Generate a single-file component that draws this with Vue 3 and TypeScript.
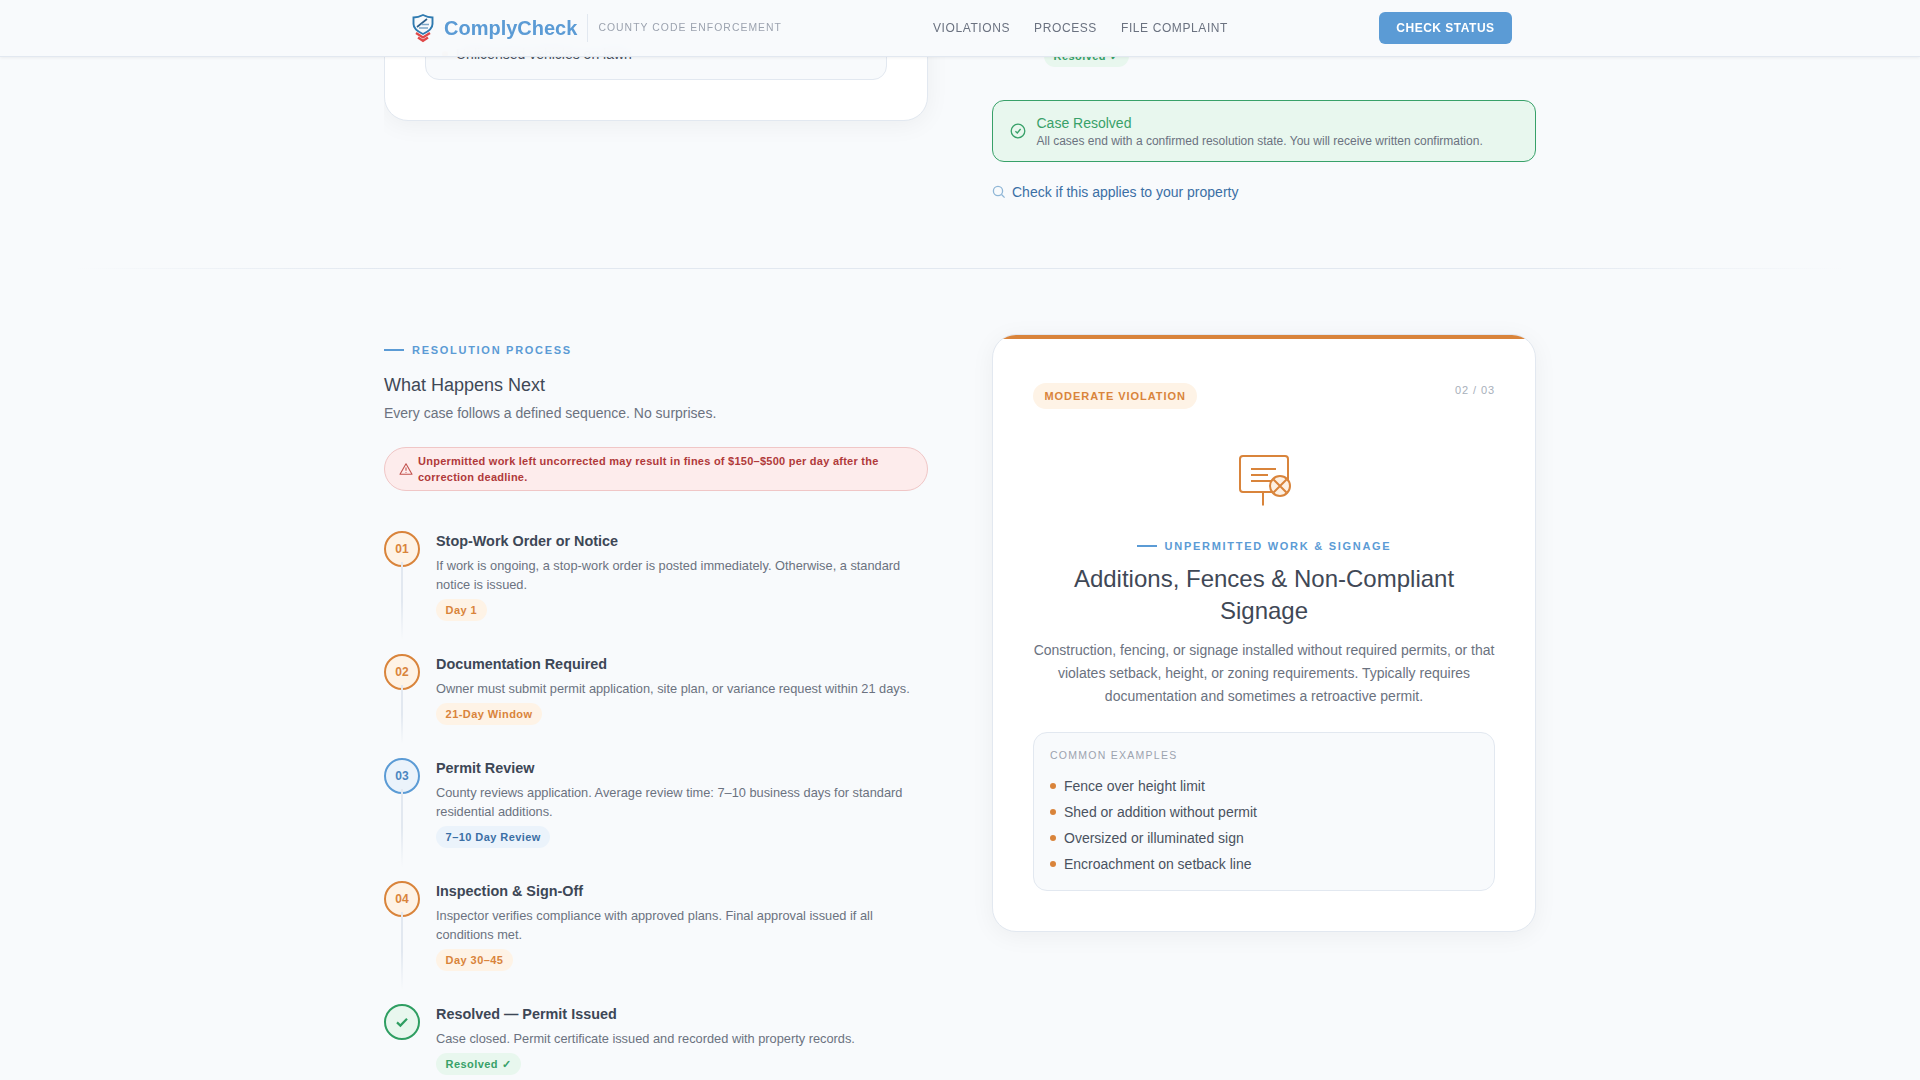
<script setup lang="ts">
interface Step {
    label: string,
    title: string,
    text: string,
    tag: string,
    tone: 'orange' | 'blue' | 'green',
    done?: boolean,
}

const navItems: Array<string> = ['VIOLATIONS', 'PROCESS', 'FILE COMPLAINT'];

const steps: Array<Step> = [
    {
        label: '01',
        title: 'Stop-Work Order or Notice',
        text: 'If work is ongoing, a stop-work order is posted immediately. Otherwise, a standard notice is issued.',
        tag: 'Day 1',
        tone: 'orange',
    },
    {
        label: '02',
        title: 'Documentation Required',
        text: 'Owner must submit permit application, site plan, or variance request within 21 days.',
        tag: '21-Day Window',
        tone: 'orange',
    },
    {
        label: '03',
        title: 'Permit Review',
        text: 'County reviews application. Average review time: 7–10 business days for standard residential additions.',
        tag: '7–10 Day Review',
        tone: 'blue',
    },
    {
        label: '04',
        title: 'Inspection & Sign-Off',
        text: 'Inspector verifies compliance with approved plans. Final approval issued if all conditions met.',
        tag: 'Day 30–45',
        tone: 'orange',
    },
    {
        label: '',
        title: 'Resolved — Permit Issued',
        text: 'Case closed. Permit certificate issued and recorded with property records.',
        tag: 'Resolved ✓',
        tone: 'green',
        done: true,
    },
];

const examples: Array<string> = [
    'Fence over height limit',
    'Shed or addition without permit',
    'Oversized or illuminated sign',
    'Encroachment on setback line',
];

const priorExamples: Array<string> = ['Unlicensed vehicles on lawn'];
</script>

<template>
    <header class="site-header">
        <div class="header-inner">
            <div class="brand">
                <svg class="brand-icon" viewBox="0 0 28 32" fill="none">
                    <path d="M15 3C11.5 4.8 8.5 5.5 5.5 5.5V12C5.5 16.5 9.5 19.5 15 22C20.5 19.5 24.5 16.5 24.5 12V5.5C21.5 5.5 18.5 4.8 15 3Z" stroke="#2f7ab0" stroke-width="1.9" />
                    <path d="M9 15L19 7" stroke="#2c5f8a" stroke-width="1.7" />
                    <path d="M13.5 12.5H21M11 16H20" stroke="#7da6c8" stroke-width="1.5" />
                    <path d="M8 21L15 25.5L22 21" stroke="#e04848" stroke-width="2.3" />
                    <path d="M10 25.5L15 28.8L20 25.5" stroke="#e04848" stroke-width="2.3" />
                </svg>
                <span class="brand-name">ComplyCheck</span>
                <span class="brand-sub">COUNTY CODE ENFORCEMENT</span>
            </div>
            <nav class="nav">
                <span v-for="item in navItems" :key="item">{{ item }}</span>
            </nav>
            <button class="status-btn" type="button">CHECK STATUS</button>
        </div>
    </header>

    <main class="page">
        <section class="grid top-section">
            <div class="top-left">
                <div class="card-tail">
                    <div class="examples examples-tail">
                        <ul>
                            <li v-for="item in priorExamples" :key="item">{{ item }}</li>
                        </ul>
                    </div>
                </div>
            </div>
            <div class="top-right">
                <div class="prior-step">
                    <span class="tag tag-green">Resolved ✓</span>
                </div>
                <div class="resolved-box">
                    <svg class="resolved-icon" viewBox="0 0 16 16" fill="none">
                        <circle cx="8" cy="8" r="6.8" stroke="#38a169" stroke-width="1.3" />
                        <path d="M5.4 8.2L7.3 10L10.6 6" stroke="#38a169" stroke-width="1.3" />
                    </svg>
                    <div class="resolved-copy">
                        <div class="resolved-title">Case Resolved</div>
                        <div class="resolved-text">All cases end with a confirmed resolution state. You will receive written confirmation.</div>
                    </div>
                </div>
                <div class="check-link">
                    <svg class="check-icon" viewBox="0 0 14 14" fill="none">
                        <circle cx="6" cy="6" r="4.6" stroke="#8fb6d6" stroke-width="1.3" />
                        <path d="M9.5 9.5L12.6 12.6" stroke="#8fb6d6" stroke-width="1.3" />
                    </svg>
                    <span>Check if this applies to your property</span>
                </div>
            </div>
        </section>

        <div class="divider"></div>

        <section class="grid process-section">
            <div class="process-col">
                <div class="eyebrow"><i></i>RESOLUTION PROCESS</div>
                <h2 class="process-title">What Happens Next</h2>
                <p class="process-sub">Every case follows a defined sequence. No surprises.</p>
                <div class="alert">
                    <svg class="alert-icon" viewBox="0 0 14 14" fill="none">
                        <path d="M7 1.8L13 12.2H1L7 1.8Z" stroke="#c2524e" stroke-width="1.1" stroke-linejoin="round" />
                        <path d="M7 5.6V8.8M7 10V10.8" stroke="#c2524e" stroke-width="1.1" />
                    </svg>
                    <span>Unpermitted work left uncorrected may result in fines of $150–$500 per day after the correction deadline.</span>
                </div>
                <ol class="steps">
                    <li
                        v-for="(step, index) in steps"
                        :key="step.title"
                        class="step"
                    >
                        <div class="step-rail">
                            <div class="step-dot" :class="`dot-${step.tone}`">
                                <svg v-if="step.done" class="dot-check" viewBox="0 0 14 14" fill="none">
                                    <path d="M2 7.4L5.4 10.6L12 3.8" stroke="#2f9e62" stroke-width="2.2" />
                                </svg>
                                <template v-else>{{ step.label }}</template>
                            </div>
                            <div v-if="index < steps.length - 1" class="step-line"></div>
                        </div>
                        <div class="step-body">
                            <div class="step-title">{{ step.title }}</div>
                            <p class="step-text">{{ step.text }}</p>
                            <span class="tag" :class="`tag-${step.tone}`">{{ step.tag }}</span>
                        </div>
                    </li>
                </ol>
            </div>

            <article class="violation-card">
                <div class="card-bar"></div>
                <div class="card-body">
                    <div class="card-top">
                        <span class="severity">MODERATE VIOLATION</span>
                        <span class="page-count">02 / 03</span>
                    </div>
                    <svg class="violation-icon" viewBox="0 0 56 56" fill="none">
                        <rect x="4" y="5" width="48" height="36" rx="3" stroke="#d9843b" stroke-width="2" />
                        <path d="M15 18H40M15 24H32M15 30H36M27 41.5V54.5" stroke="#d9843b" stroke-width="2" />
                        <circle cx="44" cy="35" r="10" fill="#fdf0e3" stroke="#d9843b" stroke-width="2" />
                        <path d="M37.5 28.5L50.5 41.5M50.5 28.5L37.5 41.5" stroke="#d9843b" stroke-width="2" />
                    </svg>
                    <div class="eyebrow eyebrow-center"><i></i>UNPERMITTED WORK &amp; SIGNAGE</div>
                    <h3 class="card-title">Additions, Fences &amp; Non-Compliant Signage</h3>
                    <p class="card-text">Construction, fencing, or signage installed without required permits, or that violates setback, height, or zoning requirements. Typically requires documentation and sometimes a retroactive permit.</p>
                    <div class="examples examples-full">
                        <div class="examples-label">COMMON EXAMPLES</div>
                        <ul>
                            <li v-for="item in examples" :key="item">{{ item }}</li>
                        </ul>
                    </div>
                </div>
            </article>
        </section>
    </main>
</template>

<style>
    html,
    body {
        height: 100%;
        overflow: hidden;
        background: #f8fafc;
    }
</style>

<style scoped>
    .site-header {
        position: fixed;
        top: 0;
        left: 0;
        right: 0;
        z-index: 10;
        height: 57px;
        box-sizing: border-box;
        background: rgba(248, 250, 252, 0.95);
        backdrop-filter: blur(8px);
        border-bottom: 1px solid #e2e8f0;
        box-shadow: 0 1px 3px rgba(0, 0, 0, 0.06);
    }

    .header-inner {
        max-width: 1104px;
        height: 56px;
        margin: 0 auto;
        display: flex;
        align-items: center;
        justify-content: space-between;
    }

    .brand {
        display: flex;
        align-items: center;
    }

    .brand-icon {
        width: 28px;
        height: 32px;
        margin-right: 8px;
    }

    .brand-name {
        font: bold 20px/28px "Liberation Sans", Arial, sans-serif;
        color: #5b9bd5;
        padding-right: 10px;
        border-right: 1px solid #e2e8f0;
    }

    .brand-sub {
        margin-left: 10px;
        font: 10.4px/16px "Liberation Sans", Arial, sans-serif;
        letter-spacing: 1.04px;
        color: #9ca3af;
    }

    .nav {
        display: flex;
        gap: 24px;
        font: 12px/16px "Liberation Sans", Arial, sans-serif;
        letter-spacing: 0.6px;
        color: #6b7280;
    }

    .status-btn {
        width: 133px;
        height: 32px;
        border: 0;
        border-radius: 6px;
        background: #5b9bd5;
        color: #fff;
        font: bold 12px/16px "Liberation Sans", Arial, sans-serif;
        letter-spacing: 0.5px;
    }

    .page {
        font-family: "Liberation Sans", Arial, sans-serif;
        height: 1080px;
        overflow: hidden;
        background: #f8fafc;
    }

    .grid {
        width: 1152px;
        margin: 0 auto;
        display: grid;
        grid-template-columns: 544px 544px;
        column-gap: 64px;
    }

    .top-section {
        height: 268px;
        grid-template-rows: 268px;
        overflow: hidden;
    }

    .top-left {
        align-self: end;
        margin-bottom: 147px;
    }

    .card-tail {
        padding: 40px;
        background: #fff;
        border: 1px solid #e2e8f0;
        border-radius: 24px;
        box-shadow: 0 4px 24px rgba(0, 0, 0, 0.05);
    }

    .top-right {
        align-self: end;
        margin-bottom: 66px;
    }

    .prior-step {
        padding-left: 52px;
        margin-bottom: 33px;
        line-height: 22px;
    }

    .resolved-box {
        height: 62px;
        box-sizing: border-box;
        display: flex;
        align-items: center;
        gap: 10.5px;
        padding: 0 17px;
        background: #e8f7ee;
        border: 1px solid #38a169;
        border-radius: 12px;
    }

    .resolved-icon {
        width: 16px;
        height: 16px;
        flex: none;
    }

    .resolved-copy {
        padding-top: 2px;
    }

    .resolved-title {
        font-size: 14px;
        line-height: 18px;
        color: #38a169;
    }

    .resolved-text {
        font-size: 12px;
        line-height: 18px;
        color: #6b7280;
    }

    .check-link {
        margin-top: 20px;
        display: flex;
        align-items: center;
        gap: 6px;
        font-size: 14px;
        line-height: 20px;
        color: #3b6fa5;
    }

    .check-icon {
        width: 14px;
        height: 14px;
    }

    .divider {
        height: 1px;
        background: linear-gradient(90deg, transparent 4%, #e2e8f0 20%, #e2e8f0 80%, transparent 96%);
    }

    .process-section {
        padding-top: 65px;
        align-items: start;
    }

    .process-col {
        padding-top: 8px;
    }

    .eyebrow {
        display: flex;
        align-items: center;
        gap: 8px;
        font-size: 11px;
        line-height: 16px;
        font-weight: bold;
        letter-spacing: 1.72px;
        color: #5b9bd5;
    }

    .eyebrow i {
        width: 20px;
        height: 2px;
        background: #5b9bd5;
    }

    .eyebrow-center {
        justify-content: center;
        margin-top: 31px;
    }

    .process-title {
        margin: 15px 0 0;
        font-size: 18px;
        line-height: 25px;
        font-weight: normal;
        color: #3f4856;
    }

    .process-sub {
        margin: 5px 0 0;
        font-size: 14px;
        line-height: 20px;
        color: #6b7280;
    }

    .alert {
        margin-top: 24px;
        height: 44px;
        box-sizing: border-box;
        display: flex;
        align-items: center;
        gap: 5px;
        padding: 0 14px;
        background: #fdecec;
        border: 1px solid #f0c6c6;
        border-radius: 22px;
        font-size: 11px;
        line-height: 16px;
        font-weight: bold;
        letter-spacing: 0.25px;
        color: #b03a3a;
    }

    .alert-icon {
        width: 14px;
        height: 14px;
        flex: none;
    }

    .steps {
        list-style: none;
        margin: 40px 0 0;
        padding: 0;
    }

    .step {
        display: flex;
        gap: 16px;
    }

    .step-rail {
        width: 36px;
        flex: none;
        display: flex;
        flex-direction: column;
        align-items: center;
    }

    .step-dot {
        width: 36px;
        height: 36px;
        box-sizing: border-box;
        flex: none;
        display: flex;
        align-items: center;
        justify-content: center;
        border: 2px solid;
        border-radius: 50%;
        font-size: 12px;
        font-weight: bold;
    }

    .dot-orange {
        color: #d9843b;
        background: #fef3e6;
    }

    .dot-blue {
        color: #4a86c0;
        background: #ebf3fb;
        border-color: #5b9bd5;
    }

    .dot-green {
        color: #2f9e62;
        background: #e8f7ee;
    }

    .dot-check {
        width: 14px;
        height: 14px;
    }

    .step-line {
        flex: 1;
        width: 2px;
        margin: -5px 0 14px;
        background: linear-gradient(180deg, #e2e8f0 50%, rgba(226, 232, 240, 0));
    }

    .step-body {
        padding-bottom: 32.6px;
    }

    .step-title {
        font-size: 14.4px;
        line-height: 20px;
        font-weight: bold;
        color: #3d4756;
    }

    .step-text {
        margin: 5px 0;
        font-size: 12.8px;
        line-height: 19.2px;
        color: #6b7280;
    }

    .tag {
        display: inline-block;
        height: 22px;
        padding: 0 9.6px;
        border-radius: 11px;
        font-size: 11px;
        line-height: 22px;
        font-weight: bold;
        letter-spacing: 0.44px;
        vertical-align: top;
    }

    .tag-orange {
        color: #d9843b;
        background: #fef3e6;
    }

    .tag-blue {
        color: #3b6fa5;
        background: #ebf3fb;
    }

    .tag-green {
        color: #38a169;
        background: #e8f7ee;
    }

    .violation-card {
        background: #fff;
        border: 1px solid #e2e8f0;
        border-radius: 24px;
        overflow: hidden;
        box-shadow: 0 4px 24px rgba(0, 0, 0, 0.05);
    }

    .card-bar {
        height: 4px;
        background: #d9843b;
    }

    .card-body {
        padding: 44px 40px 40px;
    }

    .card-top {
        display: flex;
        justify-content: space-between;
        align-items: flex-start;
    }

    .severity {
        height: 26px;
        padding: 0 11.5px;
        border-radius: 13px;
        background: #fef3e6;
        color: #d9843b;
        font-size: 11px;
        line-height: 26px;
        font-weight: bold;
        letter-spacing: 0.95px;
    }

    .page-count {
        margin-top: -1px;
        font-size: 11px;
        line-height: 16px;
        letter-spacing: 0.9px;
        color: #a8b0bb;
    }

    .violation-icon {
        display: block;
        width: 56px;
        height: 56px;
        margin: 42px auto 0;
    }

    .card-title {
        margin: 9px 0 0;
        font-size: 24px;
        line-height: 32px;
        font-weight: normal;
        text-align: center;
        color: #3f4856;
    }

    .card-text {
        margin: 12px 0 0;
        font-size: 14px;
        line-height: 23px;
        text-align: center;
        color: #6b7280;
    }

    .examples {
        padding: 16px 16px 13px;
        background: #f8fafc;
        border: 1px solid #e2e8f0;
        border-radius: 14px;
    }

    .examples-tail {
        padding-bottom: 12px;
    }

    .examples-full {
        margin-top: 24px;
    }

    .examples-label {
        margin-bottom: 12px;
        font-size: 10.5px;
        line-height: 12px;
        letter-spacing: 1.26px;
        color: #9ca3af;
    }

    .examples ul {
        list-style: none;
        margin: 0;
        padding: 0;
    }

    .examples li {
        display: flex;
        align-items: center;
        gap: 8px;
        font-size: 14px;
        line-height: 26px;
        color: #4a5260;
    }

    .examples li::before {
        content: "";
        width: 6px;
        height: 6px;
        border-radius: 50%;
        background: #d9843b;
    }
</style>
